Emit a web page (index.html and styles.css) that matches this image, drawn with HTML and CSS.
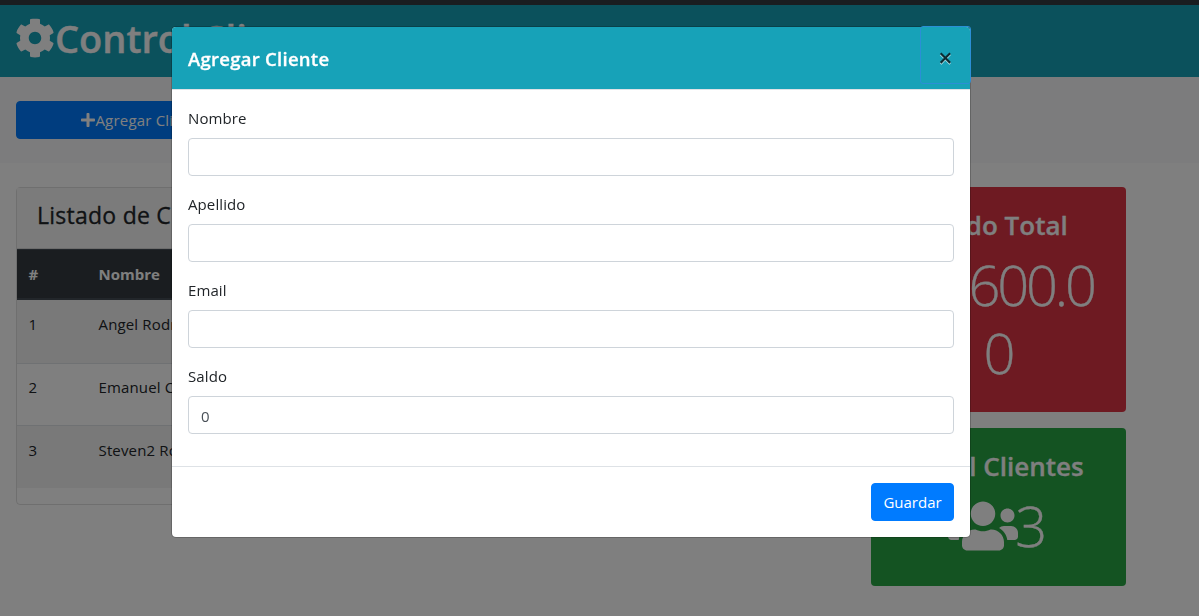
FILE: index.html
```html
<!DOCTYPE html>
<html lang="es">
<head>
<meta charset="utf-8">
<title>Control Clientes</title>
<link rel="stylesheet" href="styles.css">
</head>
<body>
<div class="navbar"></div>
<header class="header">
  <h1 class="brand"><svg class="icon-cog" viewBox="0 0 512 512"><path d="M487.4 315.7l-42.6-24.6c4.3-23.2 4.3-47 0-70.2l42.6-24.6c4.9-2.8 7.1-8.6 5.5-14-11.1-35.6-30-67.8-54.7-94.6-3.8-4.1-10-5.1-14.8-2.3L380.8 110c-17.9-15.4-38.5-27.3-60.8-35.1V25.8c0-5.6-3.9-10.5-9.4-11.7-36.7-8.2-74.3-7.8-109.2 0-5.5 1.2-9.4 6.1-9.4 11.7V75c-22.2 7.9-42.8 19.8-60.8 35.1L88.7 85.5c-4.9-2.8-11-1.9-14.8 2.3-24.7 26.7-43.6 58.9-54.7 94.6-1.7 5.4.6 11.2 5.5 14L67.3 221c-4.3 23.2-4.3 47 0 70.2l-42.6 24.6c-4.9 2.8-7.1 8.6-5.5 14 11.1 35.6 30 67.8 54.7 94.6 3.8 4.1 10 5.1 14.8 2.3l42.6-24.6c17.9 15.4 38.5 27.3 60.8 35.1v49.2c0 5.6 3.9 10.5 9.4 11.7 36.7 8.2 74.3 7.8 109.2 0 5.5-1.2 9.4-6.1 9.4-11.7v-49.2c22.2-7.9 42.8-19.8 60.8-35.1l42.6 24.6c4.9 2.8 11 1.9 14.8-2.3 24.7-26.7 43.6-58.9 54.7-94.6 1.5-5.5-.7-11.3-5.6-14.1zM256 336c-44.1 0-80-35.9-80-80s35.9-80 80-80 80 35.9 80 80-35.9 80-80 80z"/></svg><span>Control Clientes</span></h1>
</header>
<section class="actions">
  <a class="btn btn-add"><svg class="icon-plus" viewBox="0 0 448 512"><path d="M416 208H272V64c0-17.67-14.33-32-32-32h-32c-17.67 0-32 14.33-32 32v144H32c-17.67 0-32 14.33-32 32v32c0 17.67 14.33 32 32 32h144v144c0 17.67 14.33 32 32 32h32c17.67 0 32-14.33 32-32V304h144c17.67 0 32-14.33 32-32v-32c0-17.67-14.33-32-32-32z"/></svg><span>Agregar Cliente</span></a>
</section>
<main class="content">
  <section class="card">
    <div class="card-header"><h4>Listado de Clientes</h4></div>
    <table class="table">
      <thead><tr><th class="col-id">#</th><th>Nombre</th></tr></thead>
      <tbody>
        <tr><td>1</td><td>Angel Rodriguez</td></tr>
        <tr><td>2</td><td>Emanuel C</td></tr>
        <tr><td>3</td><td>Steven2 Rodriguez</td></tr>
      </tbody>
    </table>
  </section>
  <aside class="stats">
    <div class="stat stat-danger">
      <h3>Saldo Total</h3>
      <p class="figure">$4,600.00</p>
    </div>
    <div class="stat stat-success">
      <h3>Total Clientes</h3>
      <p class="figure"><svg class="icon-users" viewBox="0 0 640 512"><path d="M96 224c35.3 0 64-28.7 64-64s-28.7-64-64-64-64 28.7-64 64 28.7 64 64 64zm448 0c35.3 0 64-28.7 64-64s-28.7-64-64-64-64 28.7-64 64 28.7 64 64 64zm32 32h-64c-17.6 0-33.5 7.1-45.1 18.6 40.3 22.1 68.9 62 75.1 109.4h66c17.7 0 32-14.3 32-32v-32c0-35.3-28.7-64-64-64zm-256 0c61.9 0 112-50.1 112-112S381.9 32 320 32 208 82.1 208 144s50.1 112 112 112zm76.8 32h-8.3c-20.8 10-43.9 16-68.5 16s-47.6-6-68.5-16h-8.3C179.6 288 128 339.6 128 403.2V432c0 26.5 21.5 48 48 48h288c26.5 0 48-21.5 48-48v-28.8c0-63.6-51.6-115.2-115.2-115.2zm-223.7-13.4C161.5 263.1 145.6 256 128 256H64c-35.3 0-64 28.7-64 64v32c0 17.7 14.3 32 32 32h65.9c6.3-47.4 34.9-87.3 75.2-109.4z"/></svg>3</p>
    </div>
  </aside>
</main>
<div class="backdrop">
  <div class="dialog-area">
    <form class="modal">
      <div class="modal-header">
        <h5>Agregar Cliente</h5>
        <button class="close" type="button">×</button>
      </div>
      <div class="modal-body">
        <div class="group"><label for="nombre">Nombre</label><input id="nombre" type="text"></div>
        <div class="group"><label for="apellido">Apellido</label><input id="apellido" type="text"></div>
        <div class="group"><label for="email">Email</label><input id="email" type="text"></div>
        <div class="group"><label for="saldo">Saldo</label><input id="saldo" type="text" value="0"></div>
      </div>
      <div class="modal-footer"><button class="btn" type="button">Guardar</button></div>
    </form>
  </div>
</div>
</body>
</html>
```
FILE: styles.css
```css
* { box-sizing: border-box; }
html, body { height: 100%; }
body {
  margin: 0;
  overflow: hidden;
  background: #fff;
  color: #212529;
  font-family: "Open Sans", "Noto Sans", sans-serif;
  font-size: 15px;
  line-height: 24px;
}
h1, h3, h4, h5, p { margin: 0; font-weight: 600; }
svg { display: block; fill: currentColor; flex: none; }

.navbar { height: 5px; background: #343a40; }
.header { height: 72px; padding: 8px 16px; background: #17a2b8; color: #fff; }
.brand {
  display: flex;
  align-items: center;
  height: 50px;
  margin-left: -1px;
  font-size: 38px;
  white-space: nowrap;
  -webkit-text-stroke: .4px;
}
.icon-cog { width: 40px; height: 40px; }

.actions { padding: 24px 16px; background: #f8f9fa; }
.btn {
  display: inline-flex;
  align-items: center;
  justify-content: center;
  height: 38px;
  padding: 0 12px;
  border: 1px solid #007bff;
  border-radius: 4px;
  background: #007bff;
  color: #fff;
  font: inherit;
}
.btn-add { display: flex; width: 255px; letter-spacing: .2px; }
.modal-footer .btn { width: 83px; padding: 0; }
.icon-plus { width: 14px; height: 16px; }

.content { display: flex; align-items: flex-start; gap: 30px; padding: 24px 16px; }
.card {
  width: 825px;
  border: 1px solid rgba(0, 0, 0, .125);
  border-radius: 4px;
  padding-bottom: 16px;
}
.card-header {
  height: 61px;
  padding: 12px 20px;
  background: #f7f7f7;
  border-bottom: 1px solid rgba(0, 0, 0, .125);
}
.card-header h4 { font-size: 23px; font-weight: 500; line-height: 30px; letter-spacing: .25px; -webkit-text-stroke: .3px; }
.table { width: 100%; border-collapse: separate; border-spacing: 0; table-layout: fixed; }
.table th {
  height: 51px;
  padding: 12px 11.5px;
  border-top: 1px solid #454d55;
  border-bottom: 2px solid #454d55;
  background: #343a40;
  color: #fff;
  text-align: left;
  font-weight: 700;
}
.table .col-id { width: 70px; }
.table td {
  height: 62.7px;
  padding: 11px 11.5px;
  border-top: 1px solid #dee2e6;
  vertical-align: top;
  letter-spacing: .15px;
}
.table tbody tr:first-child td { border-top: 0; padding-top: 12px; }
.table tbody tr:last-child td { padding-top: 11.7px; }
.table tbody tr:nth-child(odd) { background: #f2f2f2; }

.stats { display: flex; flex-direction: column; gap: 16px; width: 255px; }
.stat {
  padding: 21px 20px 28px;
  border-radius: 4px;
  color: #fff;
  text-align: center;
}
.stat-danger { height: 225px; background: #dc3545; }
.stat-success { height: 158px; background: #28a745; }
.stat h3 { height: 42px; font-size: 26px; line-height: 35px; -webkit-text-stroke: .3px; }
.figure {
  font-size: 56px;
  font-weight: 300;
  line-height: 68px;
  letter-spacing: -3.4px;
  word-break: break-all;
  -webkit-text-stroke: .3px;
}
.stat-danger .figure { margin-left: -1px; letter-spacing: -3.2px; }
.stat-success .figure { margin-left: -5px; }
.icon-users { display: inline-block; width: 70px; height: 56px; margin-right: -3px; vertical-align: -7px; }

.backdrop { position: fixed; inset: 0; background: rgba(0, 0, 0, .5); }
.dialog-area { display: flex; justify-content: center; width: 1142px; padding-top: 26px; }
.modal {
  width: 800px;
  border: 1px solid rgba(0, 0, 0, .2);
  border-radius: 5px;
  background: #fff;
  background-clip: padding-box;
}
.modal-header {
  display: flex;
  justify-content: space-between;
  height: 63px;
  padding: 16px;
  border-bottom: 1px solid #dee2e6;
  border-radius: 4px 4px 0 0;
  background: #17a2b8;
  color: #fff;
}
.modal-header h5 { font-size: 18.5px; line-height: 32px; letter-spacing: .27px; -webkit-text-stroke: .3px; }
.close {
  width: 49px;
  height: 56px;
  margin: -16px -16px 0 0;
  padding: 3px 0 0;
  border: 0;
  border-radius: 2px;
  outline: 1px solid #2b8fd6;
  background: transparent;
  color: #0c2c32;
  font: 600 25px/50px "Open Sans", sans-serif;
  text-shadow: 0 1px 0 #b9e2e9;
}
.modal-body { display: flex; flex-direction: column; gap: 16px; padding: 16px 16px 32px; }
.group { display: flex; flex-direction: column; gap: 8px; }
.group label { letter-spacing: .1px; }
.group input {
  height: 38px;
  padding: 2px 12px 0;
  border: 1px solid #ced4da;
  border-radius: 4px;
  background: #fff;
  color: #495057;
  font: inherit;
}
.modal-footer {
  display: flex;
  justify-content: flex-end;
  padding: 16px;
  border-top: 1px solid #dee2e6;
}
```
